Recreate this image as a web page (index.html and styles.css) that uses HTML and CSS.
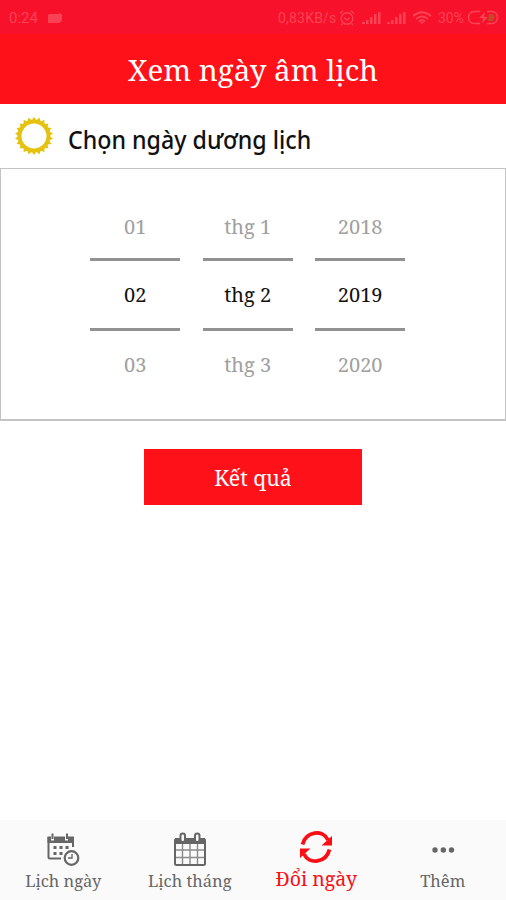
FILE: index.html
```html
<!DOCTYPE html>
<html lang="vi">
<head>
<meta charset="utf-8">
<title>Xem ngày âm lịch</title>
<link rel="stylesheet" href="styles.css">
</head>
<body>
<div class="status">
  <span class="clock">0:24</span>
  <svg class="cam" width="16" height="12" viewBox="0 0 16 12"><path d="M2 2h9l2-1 2 2v6l-3 2H1V3z" fill="currentColor"/></svg>
  <span class="speed">0,83KB/s</span>
  <svg class="alarm" width="16" height="16" viewBox="0 0 16 16" fill="none" stroke="currentColor" stroke-width="1.400"><circle cx="8" cy="8.500" r="5.800"/><path d="M1 3.500 4 1M15 3.500 12 1M5 7.500l3 2.500 2.500-2M3.500 13.500 2 15M12.500 13.500 14 15"/></svg>
  <svg class="signal" width="19" height="14" viewBox="0 0 19 14" fill="currentColor"><path d="M0 11h3v2H0zM4 9h2.500v4H4zM8 6h2.500v7H8zM12 3h2.500v10H12zM16 1h2.500v12H16z"/></svg>
  <svg class="signal second" width="19" height="14" viewBox="0 0 19 14" fill="currentColor"><path d="M0 11h3v2H0zM4 9h2.500v4H4zM8 6h2.500v7H8zM12 3h2.500v10H12zM16 1h2.500v12H16z"/></svg>
  <svg class="wifi" width="20" height="14" viewBox="0 0 20 14" fill="none" stroke="currentColor" stroke-width="1.800"><path d="M1 5Q10-2.500 19 5M4 8Q10 3 16 8M7 10.500Q10 8 13 10.500"/><path d="m8 11 2 2 2-2z" fill="currentColor" stroke="none"/></svg>
  <span class="percent">30%</span>
  <svg class="battery" width="33" height="15" viewBox="0 0 33 15"><path d="M13 1.500H7a5.500 6 0 0 0 0 12h6M20 1.500h5a5.500 6 0 0 1 0 12h-5" fill="none" stroke="currentColor" stroke-width="1.500"/><path d="M22 4h4q3 3.500 0 7h-5z" fill="#c04a2a"/><path d="m18 2-6 6h4l-1 5 6-6h-4z" fill="currentColor"/></svg>
</div>
<header class="title"><h1>Xem ngày âm lịch</h1></header>
<main>
  <div class="section">
    <svg class="sun" width="40" height="40" viewBox="-20 -20 40 40" fill="#e4c20d">
      <defs><path id="ray" d="M-2.500-15 0-19.200 2.500-15z"/><g id="rays"><use href="#ray"/><use href="#ray" transform="rotate(16.364)"/><use href="#ray" transform="rotate(32.727)"/><use href="#ray" transform="rotate(49.091)"/><use href="#ray" transform="rotate(65.455)"/><use href="#ray" transform="rotate(81.818)"/><use href="#ray" transform="rotate(98.182)"/><use href="#ray" transform="rotate(114.545)"/><use href="#ray" transform="rotate(130.909)"/><use href="#ray" transform="rotate(147.273)"/><use href="#ray" transform="rotate(163.636)"/></g></defs>
      <use href="#rays"/><use href="#rays" transform="rotate(180)"/>
      <circle r="14.500" fill="none" stroke="#e4c20d" stroke-width="4"/>
    </svg>
    <h2>Chọn ngày dương lịch</h2>
  </div>
  <div class="picker">
    <div class="wheel"><span>01</span><b>02</b><span>03</span></div>
    <div class="wheel"><span>thg 1</span><b>thg 2</b><span>thg 3</span></div>
    <div class="wheel"><span>2018</span><b>2019</b><span>2020</span></div>
  </div>
  <button class="result"><span>Kết quả</span></button>
</main>
<nav class="tabs">
  <a class="tab">
    <svg width="34" height="34" viewBox="0 0 34 34" fill="none" stroke="currentColor"><path d="M2.500 5v20q0 1.500 1.500 1.500h11M27 5v10" stroke-width="2"/><path d="M1.500 4.500H5v4h3v-4h11v4h3v-4h6V11H1.500z" fill="currentColor" stroke="none"/><path d="M6.500 1.500V7M21 1.500V7" stroke-width="2"/><path d="M7.500 15.500h3m3 0h3m3 0h3M7.500 21.500h3m3 0h3" stroke-width="3"/><circle cx="25.500" cy="26" r="6.800" stroke-width="2.200"/><path d="M26 22v4h-4" stroke-width="1.400"/></svg>
    <span>Lịch ngày</span>
  </a>
  <a class="tab">
    <svg width="34" height="34" viewBox="0 0 34 34" fill="none" stroke="currentColor"><rect x="2" y="7" width="30" height="26" rx="1.500" stroke-width="2"/><path d="M2 6h30v6H2z" fill="currentColor" stroke="none"/><path d="M2 18h30M2 25.500h30M9.500 12v21M17 12v21M24.500 12v21" stroke-width="1.400" opacity=".75"/><rect x="7.500" y="1.500" width="4.500" height="8.500" rx="2.200" fill="#fafafa" stroke-width="2"/><rect x="22" y="1.500" width="4.500" height="8.500" rx="2.200" fill="#fafafa" stroke-width="2"/></svg>
    <span>Lịch tháng</span>
  </a>
  <a class="tab active">
    <svg width="34" height="34" viewBox="0 0 34 34"><path d="M3.500 14.500C7 1 24-1 29 10M30.500 19.500C27 33 10 35 5 24" fill="none" stroke="currentColor" stroke-width="3.800"/><path d="M33 6v9.500H22.500zM1 28v-9.500h10.500z" fill="currentColor"/></svg>
    <span>Đổi ngày</span>
  </a>
  <a class="tab">
    <svg width="34" height="34" viewBox="0 0 34 34" fill="currentColor"><circle cx="9" cy="18" r="2.700"/><circle cx="17.300" cy="18" r="2.700"/><circle cx="25.500" cy="18" r="2.700"/></svg>
    <span>Thêm</span>
  </a>
</nav>
</body>
</html>
```
FILE: styles.css
```css
* { box-sizing: border-box; }
body { margin: 0; height: 900px; display: flex; flex-direction: column; background: #fff; font-family: "Noto Serif", "DejaVu Serif Condensed", "DejaVu Serif", serif; overflow: hidden; }
svg { display: block; flex: none; }
.status { height: 34px; flex: none; display: flex; align-items: center; padding: 1px 6px 0 9px; background: #f8112b; color: #f94355; font: 400 14px Roboto, sans-serif; }
.clock { width: 38px; font-size: 15px; }
.speed { margin-left: auto; width: 57px; white-space: nowrap; letter-spacing: .2px; }
.alarm { margin-left: 4px; }
.signal { margin-left: 7px; }
.second { margin-left: 6px; }
.wifi { margin-left: 6px; }
.percent { margin-left: 6px; width: 27px; }
.battery { margin-left: 2px; }
.title { height: 70px; flex: none; display: flex; align-items: center; justify-content: center; padding-top: 2px; background: #ff1119; color: #fff; }
h1 { margin: 0; font-size: 29.5px; font-weight: 400; line-height: 40px; white-space: nowrap; }
main { flex: 1; }
.section { height: 64px; display: flex; align-items: center; padding-left: 14px; }
h2 { margin: 5px 0 0 14px; font: 500 25px/36px "Noto Sans", sans-serif; color: #111; white-space: nowrap; transform: scaleX(.928); transform-origin: left; }
.picker { height: 253px; display: flex; justify-content: center; gap: 22.5px; padding: 24px 10.6px 0 0; margin-bottom: 28px; border: solid #c4c4c4; border-width: 1px 1px 2px 1px; }
.wheel { width: 90px; display: flex; flex-direction: column; text-align: center; font-size: 20px; line-height: 68px; color: #a0a0a0; }
.wheel span { height: 65px; }
.wheel b { height: 73px; font-weight: 400; color: #111; border: solid #929292; border-width: 3px 0; }
.wheel b + span { line-height: 67px; }
.result { display: block; width: 218px; height: 56px; margin: 0 auto; border: 0; padding: 2px 0 0; background: #ff1119; color: #fff; font: 21.3px/54px "Noto Serif", "DejaVu Serif Condensed", "DejaVu Serif", serif; }
.tabs { height: 80px; flex: none; display: grid; grid-template-columns: repeat(4, 1fr); background: #fafafa; color: #666; }
.tab { display: flex; flex-direction: column; align-items: center; padding-top: 12px; font-size: 16.5px; line-height: 24px; white-space: nowrap; }
.tab span { margin-top: 3px; }
.active { color: #fb0d14; font-size: 19.5px; padding-top: 10px; }
```
